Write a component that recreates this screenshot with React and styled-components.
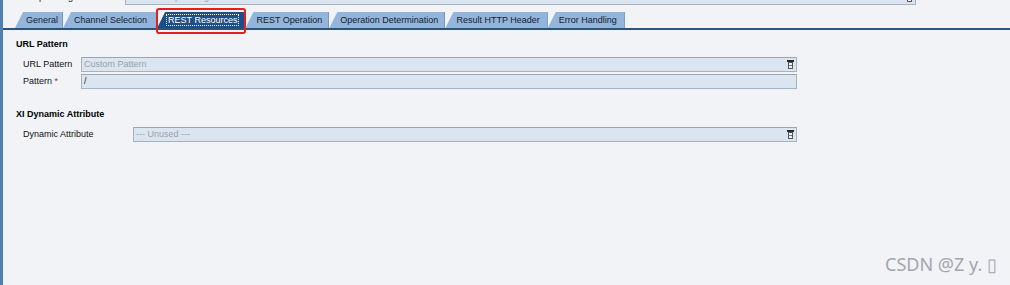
import React from "react";
import styled, { createGlobalStyle } from "styled-components";

const Global = createGlobalStyle`
  html, body { margin: 0; padding: 0; background: #f1f3f7; }
  body { font-family: "Liberation Sans", Arial, sans-serif; font-size: 9px; color: #000; }
`;

const Page = styled.div`
  position: relative;
  height: 285px;
  overflow: hidden;
  border-left: 3px solid #4f80b5;
  background: #f1f3f7;
`;

const TopClip = styled.div`
  height: 5px;
  overflow: hidden;
`;

const Row = styled.div`
  display: grid;
  grid-template-columns: ${(p) => p.$label}px ${(p) => p.$field}px;
  padding-left: ${(p) => p.$indent}px;
  align-items: center;
  margin-top: ${(p) => p.$shift || 0}px;
`;

const Label = styled.div`
  line-height: 15px;
  white-space: nowrap;
  color: #111;
`;

const Req = styled.span`
  color: #b3261e;
`;

const Field = styled.div`
  position: relative;
  box-sizing: border-box;
  height: 15px;
  border: 1px solid #a8b2bd;
  border-top-color: #9ba6b2;
  background: #dbe5f1;
  color: ${(p) => (p.$muted ? "#9c9fa3" : "#222")};
  padding-left: 2px;
  line-height: 13px;
  white-space: nowrap;
  overflow: hidden;
`;

const DropIcon = styled.svg`
  position: absolute;
  right: 2px;
  top: 2px;
`;

const TabStrip = styled.div`
  display: flex;
  margin-top: 7px;
  padding-left: 12px;
  height: 16px;
  border-bottom: 2px solid #2c5379;
`;

const TabWrap = styled.div`
  position: relative;
  display: flex;
`;

const TabFace = styled.div`
  display: flex;
  align-items: center;
  height: 16px;
  padding: 0 ${(p) => p.$right}px 0 10px;
  clip-path: polygon(8px 0, 100% 0, 100% 100%, 0 100%);
  background: ${(p) => (p.$active ? "#1d4f86" : "#93b5dc")};
  color: ${(p) => (p.$active ? "#fff" : "#14202c")};
  box-shadow: inset -1px 0 0 ${(p) => (p.$active ? "#163f6c" : "#7598c0")};
  white-space: nowrap;
`;

const TabText = styled.span`
  line-height: 10px;
  padding: 0 1px;
  outline: ${(p) => (p.$focus ? "1px dotted #fff" : "none")};
`;

const Highlight = styled.div`
  position: absolute;
  left: -1px;
  top: -4px;
  right: -1px;
  bottom: -6px;
  border: 2px solid #e3211c;
  border-radius: 3px;
  pointer-events: none;
`;

const Content = styled.div`
  padding: 8px 0 0 13px;
`;

const Section = styled.section`
  margin-top: ${(p) => p.$top || 0}px;
`;

const SectionTitle = styled.div`
  font-weight: bold;
  line-height: 12px;
  color: #000;
`;

const Rows = styled.div`
  display: flex;
  flex-direction: column;
  gap: 2px;
  margin-top: 7px;
`;

const Watermark = styled.div`
  position: absolute;
  right: 13px;
  bottom: 10px;
  font-family: "Noto Sans", "Liberation Sans", sans-serif;
  font-size: 18px;
  line-height: 22px;
  color: #a3a6aa;
  white-space: nowrap;
`;

function Drop() {
  return (
    <DropIcon width="7" height="9" viewBox="0 0 7 9">
      <rect x="0" y="0" width="7" height="2" fill="#2a2a2a" />
      <rect x="1.5" y="2.5" width="4" height="6" fill="#eef1f4" stroke="#555" strokeWidth="1" />
      <line x1="2" y1="5.5" x2="5" y2="5.5" stroke="#777" strokeWidth="1" />
    </DropIcon>
  );
}

const tabs = [
  { label: "General", right: 4 },
  { label: "Channel Selection", right: 9 },
  { label: "REST Resources", active: true, right: 7 },
  { label: "REST Operation", right: 6 },
  { label: "Operation Determination", right: 6 },
  { label: "Result HTTP Header", right: 7 },
  { label: "Error Handling", right: 7 },
];

export default function App() {
  return (
    <>
      <Global />
      <Page>
        <TopClip>
          <Row $label={102} $field={791} $indent={20} $shift={-10}>
            <Label>Adapter Engine</Label>
            <Field $muted>
              Central Adapter Engine
              <Drop />
            </Field>
          </Row>
        </TopClip>

        <TabStrip>
          {tabs.map((t) => (
            <TabWrap key={t.label}>
              <TabFace $active={t.active} $right={t.right}>
                <TabText $focus={t.active}>{t.label}</TabText>
              </TabFace>
              {t.active && <Highlight />}
            </TabWrap>
          ))}
        </TabStrip>

        <Content>
          <Section>
            <SectionTitle>URL Pattern</SectionTitle>
            <Rows>
              <Row $label={58} $field={716} $indent={7}>
                <Label>URL Pattern</Label>
                <Field $muted>
                  Custom Pattern
                  <Drop />
                </Field>
              </Row>
              <Row $label={58} $field={716} $indent={7}>
                <Label>
                  Pattern <Req>*</Req>
                </Label>
                <Field>/</Field>
              </Row>
            </Rows>
          </Section>

          <Section $top={19}>
            <SectionTitle>XI Dynamic Attribute</SectionTitle>
            <Rows>
              <Row $label={110} $field={664} $indent={7}>
                <Label>Dynamic Attribute</Label>
                <Field $muted>
                  --- Unused ---
                  <Drop />
                </Field>
              </Row>
            </Rows>
          </Section>
        </Content>

        <Watermark>CSDN @Z y. ▯</Watermark>
      </Page>
    </>
  );
}
